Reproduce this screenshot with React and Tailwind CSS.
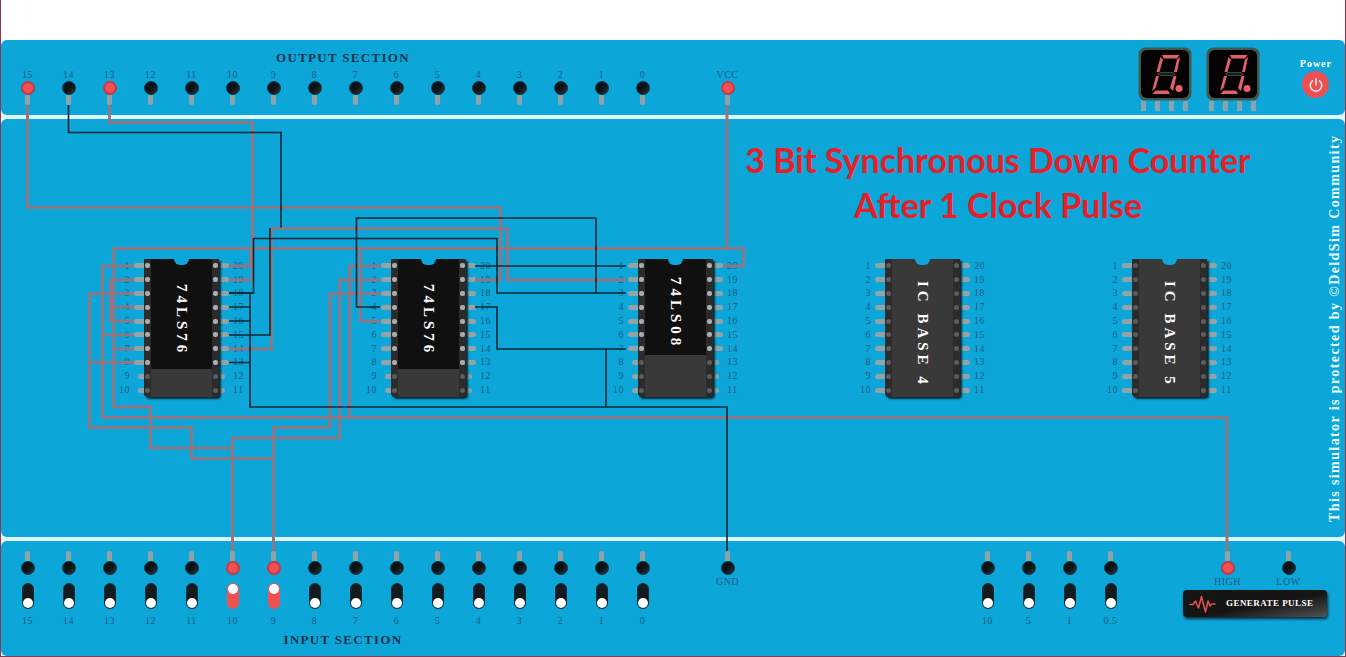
import React, { useState } from "react";

const CHANNELS = [15, 14, 13, 12, 11, 10, 9, 8, 7, 6, 5, 4, 3, 2, 1, 0];
const CLOCKS = ["10", "5", "1", "0.5"];
const SERIF = "font-['Liberation_Serif',serif]";
const LABEL = "text-[10px] leading-3 tracking-wider text-[#175c7e]";

const CHIPS = [
  { name: "74LS76", active: 8 },
  { name: "74LS76", active: 8 },
  { name: "74LS08", active: 7 },
  { name: "IC BASE 4", active: 0 },
  { name: "IC BASE 5", active: 0 },
];

const RED_WIRES = [
  "M27.5 105V207.5H500.5V280H475",
  "M109.5 105V122.5H252.5V280H229",
  "M626 280H507.5V228.5H271.5V349H229",
  "M727 105V248.5",
  "M723 266H743.5V248.5H113.5V407H150.5V448H232.5",
  "M229 266H250.5V248.5",
  "M134 307H113.5M134 349H113.5",
  "M134 280H110.5V321H134",
  "M380 321H360.5V248.5",
  "M1227 551V417.5H102.5V266H134M134 335H102.5",
  "M380 266H349.5V417.5",
  "M134 293.5H89.5V427.5H191.5V458.5H274M134 362.5H89.5",
  "M232.5 551V438H339.5V280H380",
  "M273.5 551V427.5H330V293.5H380",
];

const BLACK_WIRES = [
  "M68.5 105V132.5H281V227.5M270 228V335H229",
  "M229 293H253.5V238.5H497V293H626",
  "M229 293H250V407H727V551",
  "M229 307H250M229 321H250M229 362.5H250",
  "M606 407V349",
  "M475 307H497V349H626",
  "M380 307H356.5V218H596V293",
  "M475 266H626",
];

function Wires() {
  return (
    <svg className="pointer-events-none absolute left-0 top-0 h-[657px] w-[1346px]" viewBox="1 0 1346 657" fill="none" aria-hidden="true">
      {RED_WIRES.map((d) => (
        <g key={d}>
          <path d={d} stroke="#7f7f92" strokeWidth="3" />
          <path d={d} stroke="#b0686f" strokeWidth="1" />
        </g>
      ))}
      {BLACK_WIRES.map((d) => (
        <path key={d} d={d} stroke="#0c2733" strokeWidth="1.6" />
      ))}
    </svg>
  );
}

function Knob({ on, name }) {
  return (
    <button
      type="button"
      aria-label={name}
      className={
        on
          ? "size-[14px] rounded-full border-2 border-[#c23a4b] bg-[#f4504f]"
          : "size-[14px] rounded-full border border-[#0d3443] bg-linear-to-br from-[#0c1216] from-50% to-[#2c3a40]"
      }
    />
  );
}

function OutputJack({ label, on }) {
  return (
    <div className="flex w-[41px] flex-col items-center">
      <span className={`${LABEL} whitespace-nowrap`}>{label}</span>
      <Knob on={on} name={`Output ${label}`} />
      <span className="h-[10px] w-[5px] rounded-b-xs bg-[#8ea3a8]" />
    </div>
  );
}

function Source({ label, on }) {
  return (
    <div className="flex w-[41px] flex-col items-center">
      <span className="h-[10px] w-[5px] rounded-t-xs bg-[#8ea3a8]" />
      <Knob on={on} name={label} />
      <span className={`${LABEL} mt-px whitespace-nowrap`}>{label}</span>
    </div>
  );
}

function InputSwitch({ label, initial = false, group }) {
  const [on, setOn] = useState(initial);
  const id = `${group}-${label}`;
  return (
    <div className="flex w-[41px] flex-col items-center">
      <span className="h-[10px] w-[5px] rounded-t-xs bg-[#8ea3a8]" />
      <Knob on={on} name={`${group} ${label}`} />
      <input
        id={id}
        type="checkbox"
        checked={on}
        onChange={() => setOn(!on)}
        className="mt-2 flex h-[26px] w-[12px] appearance-none flex-col justify-end rounded-full border border-[#0d2f3d] bg-[#141a1d] before:size-[10px] before:rounded-full before:bg-white checked:justify-start checked:border-[#f0555a] checked:bg-[#f0504f]"
      />
      <label htmlFor={id} className={`${LABEL} mt-1.5`}>
        {label}
      </label>
    </div>
  );
}

function Pins({ side, active }) {
  const left = side === "left";
  return (
    <ol className="grid h-[138px] w-[30px] grid-rows-10">
      {Array.from({ length: 10 }, (_, i) => {
        const short = active > 0 && i >= active;
        return (
          <li key={i} className={`flex items-center gap-1 ${left ? "flex-row" : "flex-row-reverse"}`}>
            <span className={`${LABEL} w-[16px] ${left ? "text-right" : "text-left"}`}>{left ? i + 1 : 20 - i}</span>
            <span className="flex flex-1">
              <span
                className={`h-[5px] bg-[#93a3a6] ${short ? "w-[6px]" : "w-[10px]"} ${left ? "ml-auto rounded-l-sm" : "rounded-r-sm"}`}
              />
            </span>
          </li>
        );
      })}
    </ol>
  );
}

function Contacts({ active }) {
  return (
    <div className="grid h-[138px] w-[7px] grid-rows-10 place-items-center">
      {Array.from({ length: 10 }, (_, i) => (
        <span key={i} className={`size-[5px] ${i < active ? "rounded-xs bg-[#a9adad]" : "rounded-full bg-[#5c5c5c]"}`} />
      ))}
    </div>
  );
}

function Chip({ name, active }) {
  const cover = active === 8 ? "h-[110px] bg-[#101010]" : active === 7 ? "h-[96px] bg-[#101010]" : "h-[138px]";
  return (
    <div className="flex">
      <Pins side="left" active={active} />
      <div className="relative flex rounded-b-sm bg-[#2b2b2b] shadow-[2px_2px_2px_#0b2a36]">
        <Contacts active={active} />
        <div className="h-[138px] w-[61px] bg-[#393939]">
          <div className={`flex items-center justify-center pt-3 ${cover}`}>
            <span className="text-[15px] leading-4 font-bold tracking-[4px] whitespace-nowrap text-white [writing-mode:vertical-rl]">
              {name}
            </span>
          </div>
        </div>
        <Contacts active={active} />
        <span className="absolute left-[30px] top-0 h-[6px] w-[15px] rounded-b-full bg-[#0ca6d9]" />
      </div>
      <Pins side="right" active={active} />
    </div>
  );
}

function SevenSegment() {
  return (
    <div className="flex flex-col items-center">
      <svg className="h-[54px] w-[54px]" viewBox="0 0 54 54" role="img" aria-label="0">
        <rect x="0.5" y="0.5" width="53" height="53" rx="7" fill="#40594f" />
        <rect x="3" y="3" width="48" height="48" rx="6" fill="#050203" />
        <g fill="#e2606b">
          <path d="M24 8H41.5L39 11.5H25.5Z" />
          <path d="M22.5 10L25 12.5L21.5 25H18.5Z" />
          <path d="M42 10L39 12.5L36 25H39Z" />
          <path d="M18 29H21L17.5 41L14 44Z" />
          <path d="M35.5 29H38.5L35 44L32 41Z" />
          <path d="M14.5 47H32L30 43.5H17.5Z" />
        </g>
        <path d="M19.5 27L22 25.5H35L37 27L35 28.5H22Z" fill="#1c1c1c" stroke="#4a5451" strokeWidth="0.8" />
        <circle cx="41" cy="41.5" r="3.5" fill="#f0606a" />
      </svg>
      <div className="flex gap-[9px]">
        {[0, 1, 2, 3].map((i) => (
          <span key={i} className="h-[10px] w-[5px] bg-[#8aa3ad]" />
        ))}
      </div>
    </div>
  );
}

function PowerButton() {
  return (
    <div className="flex flex-col items-center">
      <label htmlFor="power" className="text-[10px] leading-3 font-bold tracking-widest text-white">
        Power
      </label>
      <button id="power" type="button" className="mt-px flex size-[27px] items-center justify-center rounded-full bg-[#ee4f52]">
        <svg className="size-4" viewBox="0 0 16 16" fill="none" stroke="#ffe9e6" strokeWidth="1.6" strokeLinecap="round">
          <path d="M8 1.8V8" />
          <path d="M4.4 3.8a5.8 5.8 0 1 0 7.2 0" />
        </svg>
      </button>
    </div>
  );
}

export default function App() {
  return (
    <main className={`relative min-w-[1346px] overflow-hidden border-x border-b border-[#8a3a52] bg-white pt-10 ${SERIF}`}>
      <div className="flex flex-col gap-1 bg-[#dff5fd]">
        <section className="flex justify-between rounded-md bg-[#0ca6d9] pl-1.5">
          <div className="flex h-[75px] flex-col pt-[10px]">
            <h2 className="w-[672px] text-center text-[13px] leading-4 font-bold tracking-widest text-[#10344a]">OUTPUT SECTION</h2>
            <div className="mt-[3px] flex">
              {CHANNELS.map((n) => (
                <OutputJack key={n} label={n} on={n === 15 || n === 13} />
              ))}
              <div className="ml-11">
                <OutputJack label="VCC" on />
              </div>
            </div>
          </div>
          <div className="flex items-start pr-[13px]">
            <div className="mr-10 flex gap-[14px] pt-[7px]">
              <SevenSegment />
              <SevenSegment />
            </div>
            <div className="pt-[18px]">
              <PowerButton />
            </div>
          </div>
        </section>

        <section className="flex justify-between rounded-md bg-[#0ca6d9]">
          <div className="pt-[18px] pb-[140px] pl-[113px]">
            <h1 className="ml-[620px] w-[528px] text-center font-['Lato',sans-serif] text-[34px] leading-[45px] font-bold text-[#e61e28]">
              3 Bit Synchronous Down Counter
              <br />
              After 1 Clock Pulse
            </h1>
            <div className="mt-8 flex gap-28">
              {CHIPS.map((chip, i) => (
                <Chip key={i} name={chip.name} active={chip.active} />
              ))}
            </div>
          </div>
          <p className="mr-0.5 flex rotate-180 items-center justify-center text-[14px] leading-4 font-bold tracking-widest whitespace-nowrap text-[#e9fbff] [text-orientation:sideways] [writing-mode:vertical-rl]">
            This simulator is protected by ©DeldSim Community
          </p>
        </section>

        <section className="rounded-md bg-[#0ca6d9] pt-[10px] pb-2 pl-1.5">
          <div className="flex items-start">
            {CHANNELS.map((n) => (
              <InputSwitch key={n} group="Input" label={n} initial={n === 10 || n === 9} />
            ))}
            <div className="ml-11">
              <Source label="GND" />
            </div>
            <div className="ml-[219px] flex">
              {CLOCKS.map((c) => (
                <InputSwitch key={c} group="Clock" label={c} />
              ))}
            </div>
            <div className="ml-[52px] w-[144px]">
              <div className="flex gap-5 pl-6">
                <Source label="HIGH" on />
                <Source label="LOW" />
              </div>
              <button
                type="button"
                className="mt-0.5 flex h-[27px] w-full items-center gap-2.5 rounded-sm bg-linear-to-br from-[#151515] from-55% to-[#555] pl-1.5 text-[9px] font-bold tracking-wider whitespace-nowrap text-white shadow-[1px_2px_3px_#0b2a36]"
              >
                <svg className="h-[18px] w-[27px] shrink-0" viewBox="0 0 27 18" fill="none" stroke="#e8504f" strokeWidth="1.5" strokeLinejoin="round" strokeLinecap="round">
                  <path d="M1 9.5H4L6.5 6L9.5 13L12.5 1.5L16.5 17L19 6L21 11L22.5 9H26" />
                </svg>
                GENERATE PULSE
              </button>
            </div>
          </div>
          <h2 className="mt-[5px] w-[672px] text-center text-[13px] leading-4 font-bold tracking-widest text-[#10344a]">INPUT SECTION</h2>
        </section>
      </div>
      <Wires />
    </main>
  );
}
